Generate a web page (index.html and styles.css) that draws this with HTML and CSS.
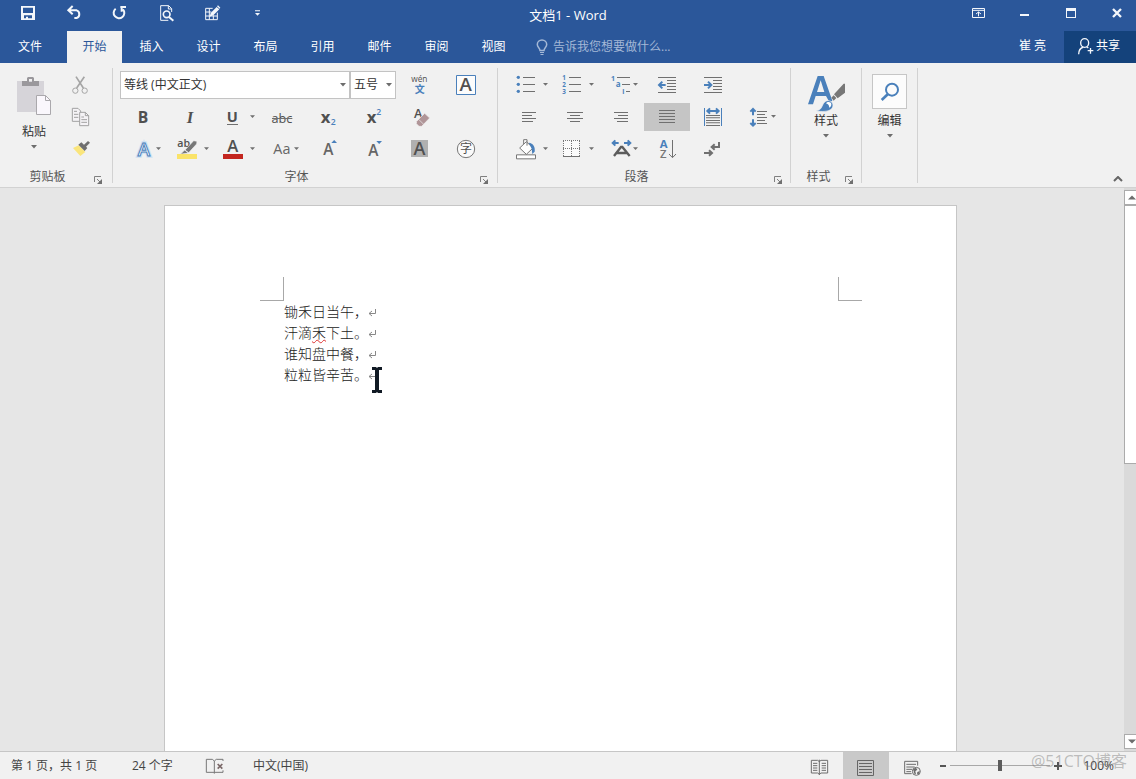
FILE: index.html
```html
<!DOCTYPE html>
<html lang="zh-CN">
<head>
<meta charset="utf-8">
<title>文档1 - Word</title>
<link rel="stylesheet" href="styles.css">
</head>
<body>
<header class="titlebar">
  <div class="quick">
    <button class="bar-btn" aria-label="保存"><svg viewBox="15 0 138 93"><path class="w" fill-rule="evenodd" d="M63 18h42v42h-42zM69 23v16h30v-16zM72 46v9h6v-5h6v5h12v-9z"/></svg></button>
    <button class="bar-btn" aria-label="撤消"><svg viewBox="153 0 138 93"><path class="ws" stroke-width="6" d="M206 31h24a11 12 0 0 1 0 23h-7M218 18l-13 13 13 12"/></svg></button>
    <button class="bar-btn" aria-label="重复"><svg viewBox="291 0 138 93"><path class="ws" stroke-width="6" d="M347 26a16 16 0 1 0 22 2M361 21h17M365 20v15"/></svg></button>
    <button class="bar-btn" aria-label="打印预览"><svg viewBox="429 0 138 93"><path class="ws" stroke-width="3" d="M515 36V26l-9-9h-24v44h23M505 17v10h10"/><circle class="ws" stroke-width="5" cx="500" cy="43" r="10"/><path class="ws" stroke-width="6" d="M507 51l13 11"/></svg></button>
    <button class="bar-btn" aria-label="绘制表格"><svg viewBox="567 0 138 93"><path class="ws" stroke-width="3" d="M638 25h-21v34h35V38M617 36h17M617 48h35M628 25v34M640 46v13"/><path class="w" d="M629 50l3-11 18-18 8 7-18 18zM651 19l3-3 7 7-2 3z"/></svg></button>
    <button class="bar-btn" aria-label="自定义快速访问工具栏"><svg viewBox="705 0 138 93"><path class="w" d="M765 31h15v3h-15zM765 39h15l-7.500 8z"/></svg></button>
  </div>
  <h1 class="title">文档1 - Word</h1>
  <div class="controls">
    <button class="bar-btn" aria-label="功能区显示选项"><svg viewBox="168 0 138 93"><path class="ws" stroke-width="3" d="M217.500 25.500h36v27h-36zM217 31h36M235.500 49V36M228 42l7.500-6 7.500 6"/></svg></button>
    <button class="bar-btn" aria-label="最小化"><svg viewBox="306 0 138 93"><path class="w" d="M360 42h27v6h-27z"/></svg></button>
    <button class="bar-btn" aria-label="最大化"><svg viewBox="444 0 138 93"><path class="w" fill-rule="evenodd" d="M498 24h30v30h-30zM501 33v18h24v-18z"/></svg></button>
    <button class="bar-btn last" aria-label="关闭"><svg viewBox="582 0 126 93"><path class="ws" stroke-width="7" d="M639 27l24 24M663 27l-24 24"/></svg></button>
  </div>
</header>
<nav class="tabs">
  <button class="tab file">文件</button>
  <button class="tab active">开始</button>
  <button class="tab">插入</button>
  <button class="tab">设计</button>
  <button class="tab">布局</button>
  <button class="tab">引用</button>
  <button class="tab">邮件</button>
  <button class="tab">审阅</button>
  <button class="tab">视图</button>
  <label class="tell"><svg width="12" height="17" viewBox="0 0 12 17"><path fill="none" stroke="#a4b8d6" stroke-width="1.500" d="M4 11.500C4 9 1.300 8.500 1.300 5.500a4.700 4.500 0 0 1 9.400 0C10.700 8.500 8 9 8 11.500z"/><path fill="#a4b8d6" d="M4 13h4v1H4zM4.500 15h3v1h-3z"/></svg><input type="text" aria-label="告诉我您想要做什么" placeholder="告诉我您想要做什么..."></label>
  <span class="user">崔 亮</span>
  <button class="share"><svg width="18" height="18" viewBox="531 110 54 54"><ellipse class="ws" stroke-width="4" cx="554" cy="128" rx="12" ry="13"/><path class="ws" stroke-width="4" d="M536 162c0-12 5-19 14-22M560 139l5 4M563 151h17M571.500 143v17"/></svg>共享</button>
</nav>

<section class="ribbon" aria-label="开始">
  <div class="group clip">
    <div class="tools clip-tools">
      <button class="big paste"><svg width="34" height="38" viewBox="0 0 34 38"><path fill="#d6d4d9" d="M0 4h27v31H0z"/><path fill="#9a989c" fill-rule="evenodd" d="M5 4h5V1l1-1h5l1 1v3h5v5H5zM12 2v3h3V2z"/><path fill="#faf7fc" stroke="#aaa8ac" d="M19.500 18.500h9l5 5v14h-14z"/><path fill="none" stroke="#aaa8ac" d="M28.500 18.500v5h5"/></svg><span>粘贴</span><svg class="caret" width="6" height="4" viewBox="0 0 6 4"><path d="M0 0h6L3 3.500z"/></svg></button>
      <div class="stack">
        <button aria-label="剪切"><svg viewBox="198 21 84 84"><path fill="none" stroke="#a5a5a5" stroke-width="5" d="M228 38l22 34M253 38l-23 34"/><circle fill="none" stroke="#a5a5a5" stroke-width="3" cx="226" cy="80" r="8"/><circle fill="none" stroke="#a5a5a5" stroke-width="3" cx="254" cy="80" r="8"/></svg></button>
        <button aria-label="复制"><svg viewBox="198 117 84 84"><g fill="#f5f3f6" stroke="#a2a2a2" stroke-width="3"><path d="M217 133h17l8 8v31h-25z"/><path d="M239 145h17l10 10v30h-27z"/><path fill="none" d="M256 145v10h10M222 142h9M222 151h13M222 160h13M244 159h8M244 167h17M244 175h17"/></g></svg></button>
        <button aria-label="格式刷"><svg viewBox="198 213 84 84"><path fill="#fae57c" d="M219 252l17-8 20 20-15 12z"/><path fill="#6f6f6f" d="M235 242l9-7 18 17-8 9zM252 242l12-11 6 5-12 12z"/></svg></button>
      </div>
    </div>
    <div class="caption"><span>剪贴板</span><button class="launch" aria-label="剪贴板设置"><svg width="8" height="8" viewBox="0 0 8 8"><path d="M.500 6V.500H7M3 3l3 3"/><path class="tip" d="M8 3v5H3z"/></svg></button></div>
  </div>

  <div class="group font">
    <div class="tools grid8">
      <div class="combo wide"><select aria-label="字体"><option>等线 (中文正文)</option></select><svg class="caret" width="6" height="4" viewBox="0 0 6 4"><path d="M0 0h6L3 3.500z"/></svg></div>
      <div class="combo"><select aria-label="字号"><option>五号</option></select><svg class="caret" width="6" height="4" viewBox="0 0 6 4"><path d="M0 0h6L3 3.500z"/></svg></div>
      <button aria-label="拼音指南"><svg viewBox="438 21 138 84"><text class="t" x="508" y="55" font-size="25" text-anchor="middle">wén</text><text class="tb m" x="509" y="87" font-size="30" text-anchor="middle">文</text></svg></button>
      <button aria-label="字符边框"><svg viewBox="576 21 138 84"><path fill="#fcfcfc" stroke="#4a80bb" stroke-width="3" d="M619.500 34.500h57v57h-57z"/><text class="t m" x="647" y="81" font-size="56" text-anchor="middle">A</text></svg></button>

      <button aria-label="加粗"><svg viewBox="360 117 138 84"><text class="t h" x="429" y="176" font-size="47" text-anchor="middle">B</text></svg></button>
      <button aria-label="倾斜"><svg viewBox="498 117 138 84"><text class="t h serif" x="570" y="176" font-size="50" text-anchor="middle">I</text></svg></button>
      <button aria-label="下划线"><svg viewBox="636 117 138 84"><text class="t h" x="697" y="173" font-size="44" text-anchor="middle">U</text><path class="g" d="M681 180h33v3h-33zM750 154h15l-7.500 8z"/></svg></button>
      <button aria-label="删除线"><svg viewBox="24 117 138 84"><text class="t" x="96" y="177" font-size="38" text-anchor="middle">abc</text><path class="g" d="M66 162h61v3h-61z"/></svg></button>
      <button aria-label="下标"><svg viewBox="162 117 138 84"><text class="t h" x="212" y="176" font-size="50">x</text><text class="tb m" x="242" y="182" font-size="26">2</text></svg></button>
      <button aria-label="上标"><svg viewBox="300 117 138 84"><text class="t h" x="350" y="176" font-size="50">x</text><text class="tb m" x="379" y="152" font-size="26">2</text></svg></button>
      <button aria-label="清除所有格式"><svg viewBox="438 117 138 84"><text class="t m" x="492" y="163" font-size="38">A</text><path fill="#b09598" stroke="#f1f1f1" stroke-width="2" d="M500 172l24-24 15 14-24 25h-8l-8-8z"/><path stroke="#f1f1f1" stroke-width="2" d="M506 166l15 15"/></svg></button>
      <span></span>

      <button aria-label="文本效果"><svg viewBox="360 213 138 84"><text x="432" y="275" font-size="56" text-anchor="middle" class="glow">A</text><text x="432" y="275" font-size="56" text-anchor="middle" class="outline">A</text><path class="g" d="M468 250h15l-7.500 8z"/></svg></button>
      <button aria-label="突出显示"><svg viewBox="498 213 138 84"><text class="t m" x="532" y="248" font-size="32">ab</text><path fill="#777" stroke="#f1f1f1" stroke-width="2" d="M555 258l26-28 10 2-1 8-24 26zM541 271l13-13 11 9z"/><path fill="#fae369" d="M531 270h60v15h-60z"/><path class="g" d="M612 250h15l-7.500 8z"/></svg></button>
      <button aria-label="字体颜色"><svg viewBox="636 213 138 84"><text class="t m" x="698" y="264" font-size="50" text-anchor="middle">A</text><path fill="#c3261f" d="M669 270h60v15h-60z"/><path class="g" d="M750 250h15l-7.500 8z"/></svg></button>
      <button aria-label="更改大小写"><svg viewBox="24 213 138 84"><text class="t l" x="70" y="270" font-size="43">Aa</text><path class="g" d="M132 250h15l-7.500 8z"/></svg></button>
      <button aria-label="增大字号"><svg viewBox="162 213 138 84"><text class="t l m" x="235" y="272" font-size="46" text-anchor="middle">A</text><path class="b" d="M244 237h17l-8.500-9z"/></svg></button>
      <button aria-label="减小字号"><svg viewBox="300 213 138 84"><text class="t l m" x="370" y="275" font-size="46" text-anchor="middle">A</text><path class="b" d="M379 231h17l-8.500 9z"/></svg></button>
      <button aria-label="字符底纹"><svg viewBox="438 213 138 84"><path fill="#b0b0b0" d="M483 228h51v51h-51z"/><text class="t m" x="508" y="273" font-size="54" text-anchor="middle">A</text></svg></button>
      <button aria-label="带圈字符"><svg viewBox="576 213 138 84"><circle fill="#fafafa" stroke="#777" stroke-width="3" cx="648" cy="255" r="26"/><text class="t" x="648" y="268" font-size="36" text-anchor="middle">字</text></svg></button>
    </div>
    <div class="caption"><span>字体</span><button class="launch" aria-label="字体设置"><svg width="8" height="8" viewBox="0 0 8 8"><path d="M.500 6V.500H7M3 3l3 3"/><path class="tip" d="M8 3v5H3z"/></svg></button></div>
  </div>

  <div class="group para">
    <div class="tools grid6">
      <button aria-label="项目符号"><svg viewBox="18 21 138 84"><g class="b"><circle cx="55" cy="40" r="5"/><circle cx="55" cy="61" r="5"/><circle cx="55" cy="82" r="5"/></g><path class="g" d="M69 39h36v3h-36zM69 60h36v3h-36zM69 81h36v3h-36zM129 57h15l-7.500 8z"/></svg></button>
      <button aria-label="编号"><svg viewBox="156 21 138 84"><g class="tb h" font-size="19"><text x="187" y="48">1</text><text x="187" y="69">2</text><text x="187" y="90">3</text></g><path class="g" d="M207 39h36v3h-36zM207 60h36v3h-36zM207 81h36v3h-36zM267 57h15l-7.500 8z"/></svg></button>
      <button aria-label="多级列表"><svg viewBox="294 21 138 84"><g class="tb h" font-size="21"><text x="333" y="50">1</text><text x="347" y="69" font-size="24">a</text><text x="367" y="89">i</text></g><path class="g" d="M351 39h39v3h-39zM366 60h24v3h-24zM378 81h12v3h-12zM399 57h15l-7.500 8z"/></svg></button>
      <button aria-label="减少缩进量"><svg viewBox="432 21 138 84"><path class="g" d="M474 39h54v3h-54zM501 48h27v3h-27zM501 57h27v3h-27zM501 66h27v3h-27zM501 75h27v3h-27zM474 84h54v3h-54z"/><path class="bs" d="M497 63h-18M487 53l-10 10 10 10"/></svg></button>
      <button aria-label="增加缩进量"><svg viewBox="570 21 138 84"><path class="g" d="M612 39h54v3h-54zM639 48h27v3h-27zM639 57h27v3h-27zM639 66h27v3h-27zM639 75h27v3h-27zM612 84h54v3h-54z"/><path class="bs" d="M612 63h20M624 53l10 10-10 10"/></svg></button>
      <span></span>

      <button aria-label="左对齐"><svg viewBox="18 117 138 84"><path class="g" d="M66 144h42v3h-42zM66 153h30v3h-30zM66 162h42v3h-42zM66 171h33v3h-33z"/></svg></button>
      <button aria-label="居中"><svg viewBox="156 117 138 84"><path class="g" d="M201 144h48v3h-48zM210 153h30v3h-30zM201 162h48v3h-48zM210 171h30v3h-30z"/></svg></button>
      <button aria-label="右对齐"><svg viewBox="294 117 138 84"><path class="g" d="M342 144h42v3h-42zM354 153h30v3h-30zM342 162h42v3h-42zM351 171h33v3h-33z"/></svg></button>
      <button class="on" aria-label="两端对齐" aria-pressed="true"><svg viewBox="432 117 138 84"><path class="g" d="M477 138h48v3h-48zM477 147h48v3h-48zM477 156h48v3h-48zM477 165h48v3h-48zM477 174h48v3h-48z"/></svg></button>
      <button aria-label="分散对齐"><svg viewBox="570 117 138 84"><path class="b" d="M612 132h3v54h-3zM663 132h3v54h-3z"/><path class="g" d="M618 153h42v3h-42zM618 160h42v3h-42zM618 168h42v3h-42zM618 175h42v3h-42zM618 183h42v3h-42z"/><path class="bs" d="M622 141h34M630 133l-8 8 8 8M648 133l8 8-8 8"/></svg></button>
      <button aria-label="行距"><svg viewBox="708 117 138 84"><path class="bs" d="M759 136v18M751 143l8-8 8 8M759 184v-18M751 177l8 8 8-8"/><path class="g" d="M771 141h30v3h-30zM771 150h24v3h-24zM771 159h30v3h-30zM771 168h24v3h-24zM771 177h30v3h-30zM813 153h15l-7.500 8z"/></svg></button>

      <button aria-label="底纹"><svg viewBox="18 213 138 84"><path fill="#fff" stroke="#777" stroke-width="3" d="M59 252l20-19 20 19-20 19zM71 240v-13h10v18M49.500 272.500h57v12h-57z"/><path class="b" d="M86 236c14 2 20 12 18 27l-7 7-2-16z"/><path class="g" d="M129 250h15l-7.500 8z"/></svg></button>
      <button aria-label="边框"><svg viewBox="156 213 138 84"><path fill="#fbfbfb" d="M190 229h48v48h-48z"/><path fill="none" stroke="#777" stroke-width="3" stroke-dasharray="3 3" d="M189 229.500h51M189 253.500h51M190.500 231v45M214.500 231v45M238.500 231v45"/><path class="g" d="M189 276h51v3h-51zM267 250h15l-7.500 8z"/></svg></button>
      <button aria-label="中文版式"><svg viewBox="294 213 138 84"><path fill="none" stroke="#5c5c5c" stroke-width="7" d="M342 276l21-27h4l22 27M350 267h32"/><path class="bs" d="M339 237h17M346 229l-8 8 8 8M372 237h17M383 229l8 8-8 8"/><path class="g" d="M399 250h15l-7.500 8z"/></svg></button>
      <button aria-label="排序"><svg viewBox="432 213 138 84"><text class="tb h" x="479" y="253" font-size="34">A</text><text class="t z m" x="480" y="282" font-size="34">Z</text><path class="gs" d="M517.500 228v52M507 270l10.500 11 10.500-11"/></svg></button>
      <button aria-label="显示编辑标记"><svg viewBox="570 213 138 84"><path class="gs thick" d="M657 234v15h-20M644 241l-9 8 9 8M612 267h22M627 259l9 8-9 8"/></svg></button>
      <span></span>
    </div>
    <div class="caption"><span>段落</span><button class="launch" aria-label="段落设置"><svg width="8" height="8" viewBox="0 0 8 8"><path d="M.500 6V.500H7M3 3l3 3"/><path class="tip" d="M8 3v5H3z"/></svg></button></div>
  </div>

  <div class="group styles">
    <div class="tools">
      <button class="big"><svg width="38" height="38" viewBox="202 30 114 114"><path fill="#4a80bb" fill-rule="evenodd" d="M205 121L234 36h18l26 74-9 4-10-18h-31l-8 25zM232 84h22l-11-35z"/><path fill="#777" d="M283 91l29-32h4v27l-22 17zM275 101l7-7 8 8-8 8z"/><path fill="#4a80bb" stroke="#f1f1f1" stroke-width="2" d="M229 141c14-3 16-9 20-18 5-12 15-16 24-11 8 5 9 15 3 22-10 10-28 9-47 7z"/><path fill="#fff" d="M259 118c4-6 15-5 16 2 1 6-4 10-6 11-1-7-3-11-10-13z"/></svg><span>样式</span><svg class="caret" width="6" height="4" viewBox="0 0 6 4"><path d="M0 0h6L3 3.500z"/></svg></button>
    </div>
    <div class="caption"><span>样式</span><button class="launch" aria-label="样式设置"><svg width="8" height="8" viewBox="0 0 8 8"><path d="M.500 6V.500H7M3 3l3 3"/><path class="tip" d="M8 3v5H3z"/></svg></button></div>
  </div>

  <div class="group edit">
    <div class="tools">
      <button class="big"><span class="find"><svg width="33" height="33" viewBox="399 33 99 99"><circle fill="none" stroke="#4a80bb" stroke-width="6" cx="456" cy="77" r="18"/><path stroke="#4a80bb" stroke-width="8" d="M444 90l-19 18"/></svg></span><span>编辑</span><svg class="caret" width="6" height="4" viewBox="0 0 6 4"><path d="M0 0h6L3 3.500z"/></svg></button>
    </div>
  </div>
  <button class="collapse" aria-label="折叠功能区"><svg width="10" height="6" viewBox="0 0 10 6"><path fill="none" stroke="#666" stroke-width="2" d="M1 5l4-4 4 4"/></svg></button>
</section>

<main class="workspace">
  <div class="canvas">
    <article class="page">
      <div class="corners"><i class="corner left"></i><i class="corner right"></i></div>
      <div class="text">
        <p>锄禾日当午，<svg class="mark" viewBox="0 0 8 8"><path d="M7.500 0v4.500H1M4 2L1 4.500 4 7"/></svg></p>
        <p>汗滴<span class="typo">禾</span>下土。<svg class="mark" viewBox="0 0 8 8"><path d="M7.500 0v4.500H1M4 2L1 4.500 4 7"/></svg></p>
        <p>谁知盘中餐，<svg class="mark" viewBox="0 0 8 8"><path d="M7.500 0v4.500H1M4 2L1 4.500 4 7"/></svg></p>
        <p class="last-line">粒粒皆辛苦。<svg class="mark" viewBox="0 0 8 8"><path d="M7.500 0v4.500H1M4 2L1 4.500 4 7"/></svg><svg class="ibeam" width="12" height="26" viewBox="0 0 12 26"><path d="M1 0h4l1 1 1-1h4v3H8v20h3v3H7l-1-1-1 1H1v-3h3V3H1z"/></svg></p>
      </div>
    </article>
  </div>
  <div class="scroll">
    <button class="arrow" aria-label="向上滚动"><svg width="8" height="5" viewBox="0 0 8 5"><path d="M0 4.500h8L4 .500z"/></svg></button>
    <div class="track"><div class="thumb"></div></div>
    <button class="arrow" aria-label="向下滚动"><svg width="8" height="5" viewBox="0 0 8 5"><path d="M0 .500h8L4 4.500z"/></svg></button>
  </div>
</main>

<footer class="status">
  <span class="pages">第 1 页，共 1 页</span>
  <span class="words">24 个字</span>
  <button class="proof" aria-label="校对"><svg width="20" height="18" viewBox="615 36 60 54"><path fill="none" stroke="#777" stroke-width="3" d="M643 82h-24V43h18l6 5v38M643 48l6-5h20v5M643 82h26v-6"/><path fill="none" stroke="#7a6868" stroke-width="5" d="M653 57l14 14M667 57l-14 14"/></svg></button>
  <span class="lang">中文(中国)</span>
  <div class="views">
    <button aria-label="阅读视图"><svg viewBox="18 81 138 81"><path fill="none" stroke="#6d6d6d" stroke-width="3" d="M85 110l-5-4H61v38h19l5 4 5-4h20v-38H90zM85 104v46M66 115h13M66 122h13M66 129h13M66 136h13M92 115h13M92 122h13M92 129h13M92 136h13"/></svg></button>
    <button class="on" aria-label="页面视图" aria-pressed="true"><svg viewBox="156 81 138 81"><path fill="none" stroke="#666" stroke-width="3" d="M199.500 106.500h48v45h-48zM204 115.500h39M204 124.500h39M204 133.500h39M204 142.500h39"/></svg></button>
    <button aria-label="Web 版式视图"><svg viewBox="294 81 138 81"><path fill="none" stroke="#6d6d6d" stroke-width="3" d="M362 146h-21v-37h39v13M346 118h29M346 126h25M346 133h17M346 140h14"/><circle fill="#f1f1f1" stroke="#6d6d6d" stroke-width="3" cx="376" cy="139" r="12"/><path fill="#6d6d6d" d="M366 132l9-4 4 6-6 5 2 9-5-2zM379 141l8-3-4 10-5-2z"/></svg></button>
  </div>
  <button class="step" aria-label="缩小"><svg width="12" height="11" viewBox="0 0 12 11"><path fill="#555" d="M3 5h6v2H3z"/></svg></button>
  <input class="zoom" type="range" min="0" max="100" value="50" aria-label="缩放">
  <button class="step" aria-label="放大"><svg width="12" height="11" viewBox="0 0 12 11"><path fill="#555" d="M2 5h8v2H2zM5 2h2v8H5z"/></svg></button>
  <button class="percent">100%</button>
  <span class="watermark">@51CTO博客</span>
</footer>
</body>
</html>
```
FILE: styles.css
```css
* { box-sizing: border-box; }
html, body { height: 100%; }
body {
  margin: 0;
  display: flex;
  flex-direction: column;
  overflow: hidden;
  background: #e6e6e6;
  color: #444;
  font: 12px/16px "Open Sans", "Noto Sans CJK SC", sans-serif;
}
button {
  margin: 0;
  padding: 0;
  border: 0;
  background: none;
  color: inherit;
  font: inherit;
}
svg { display: block; flex: none; }

/* icon paint */
.w { fill: #f4f7fb; }
.ws { fill: none; stroke: #f4f7fb; }
.g { fill: #707070; }
.gs { fill: none; stroke: #707070; stroke-width: 3; }
.gs.thick { stroke-width: 6; }
.b { fill: #4a80bb; }
.bs { fill: none; stroke: #4a80bb; stroke-width: 6; }
.t { fill: #505050; }
.tb { fill: #4a80bb; }
.l { fill: #666; }
.z { fill: #777; }
.m { font-weight: 600; }
.h { font-weight: 700; }
.serif { font-family: "Liberation Serif", serif; font-style: italic; }
.glow { fill: none; stroke: #cfe1f3; stroke-width: 10; font-weight: 600; }
.outline { fill: #fff; stroke: #4a80bb; stroke-width: 3; font-weight: 600; }

.titlebar {
  display: grid;
  grid-template-columns: 1fr auto 1fr;
  height: 31px;
  flex: none;
  background: #2b579a;
  color: #fff;
}
.quick { display: flex; padding-left: 5px; }
.controls { display: flex; justify-content: flex-end; }
.bar-btn { width: 46px; height: 31px; }
.bar-btn.last { width: 42px; }
.bar-btn svg { width: 100%; height: 100%; }
.title { margin: 0; font-size: 13px; line-height: 30px; font-weight: 400; }

.tabs {
  display: flex;
  gap: 2px;
  height: 32px;
  flex: none;
  background: #2b579a;
  color: #fff;
}
.tab { width: 55px; padding-bottom: 1px; }
.tab.file { width: 60px; margin-right: 5px; }
.tab.active { background: #f1f1f1; color: #2b579a; }
.tell { display: flex; align-items: center; gap: 5px; margin-left: 13px; flex: 1; }
.tell input {
  width: 100%;
  padding: 0;
  border: 0;
  background: none;
  color: #fff;
  font: inherit;
}
.tell input::placeholder { color: #a4b8d6; opacity: 1; }
.user { line-height: 30px; margin-right: 16px; }
.share {
  display: flex;
  align-items: center;
  gap: 1px;
  width: 72px;
  padding: 0 0 2px 13px;
  background: #14427b;
}

.ribbon {
  display: flex;
  flex: none;
  height: 125px;
  background: #f1f1f1;
  border-bottom: 1px solid #d2d2d2;
}
.group { position: relative; padding: 8px 8px 0; border-right: 1px solid transparent; }
.group::after {
  content: "";
  position: absolute;
  top: 5px;
  bottom: 4px;
  right: -1px;
  width: 1px;
  background: #d2d2d2;
}
.clip { width: 113px; }
.font { padding-left: 7px; padding-right: 9px; }
.styles { width: 71px; }
.edit { width: 56px; }
.tools { height: 92px; }
.clip-tools { display: flex; gap: 6px; }
.grid8, .grid6 { display: grid; grid-auto-rows: 28px; row-gap: 4px; }
.grid8 { grid-template-columns: repeat(8, 46px); }
.grid6 { grid-template-columns: repeat(6, 46px); }
.grid8 button svg, .grid6 button svg { width: 46px; height: 28px; }
.on { background: #c5c5c5; }
.stack { display: flex; flex-direction: column; gap: 4px; }
.stack svg { width: 28px; height: 28px; }

.big {
  display: flex;
  flex-direction: column;
  align-items: center;
  width: 100%;
  padding-top: 3px;
  color: #333;
}
.big span { margin-top: 1px; }
.big span + .caret { margin-top: 5px; }
.paste { width: 52px; padding-top: 6px; align-self: flex-start; }
.paste span { margin-top: 9px; }
.big .find { margin-top: 0; border: 1px solid #c6c6c6; background: #fcfcfc; }
.find + span { margin-top: 4px; }
.caret { fill: #6d6d6d; }

.combo { position: relative; }
.combo.wide { grid-column: span 5; }
.combo select {
  appearance: none;
  width: 100%;
  height: 28px;
  padding: 0 16px 0 3px;
  border: 1px solid #c3c3c3;
  border-radius: 0;
  background: #fff;
  color: #333;
  font: inherit;
}
.combo .caret { position: absolute; right: 4px; top: 12px; pointer-events: none; }

.caption { display: flex; height: 24px; }
.caption span { flex: 1; text-align: center; line-height: 28px; color: #555; }
.launch { width: 15px; padding: 13px 0 0 7px; display: flex; align-items: flex-start; }
.clip .launch { width: 17px; }
.launch path { fill: none; stroke: #808080; }
.launch .tip { fill: #707070; stroke: none; }
.collapse { margin: 0 13px 5px auto; align-self: flex-end; }

.workspace { display: flex; flex: 1; min-height: 0; }
.canvas { flex: 1; display: flex; justify-content: center; padding: 17px 3px 0 0; overflow: hidden; }
.page {
  width: 793px;
  background: #fff;
  border: 1px solid #c6c6c6;
  border-bottom: 0;
  padding: 71px 94px 0 95px;
  color: #222;
}
.corners { display: flex; justify-content: space-between; }
.corner { width: 24px; height: 24px; border-bottom: 1px solid #a8a8a8; }
.corner.left { border-right: 1px solid #a8a8a8; }
.corner.right { border-left: 1px solid #a8a8a8; }
.text { padding: 0 24px; font: 300 14px/21px "Noto Sans CJK SC", sans-serif; }
.text p { margin: 0; display: flex; align-items: center; }
.mark { width: 8px; height: 8px; margin-top: 2px; fill: none; stroke: #888; }
.typo { text-decoration: underline wavy #d33 1px; text-underline-offset: 1px; }
.last-line { position: relative; }
.ibeam { position: absolute; left: 87px; top: 3px; fill: #111a24; }

.scroll { display: flex; flex-direction: column; width: 12px; padding: 2px 0; background: #dadada; }
.arrow {
  display: flex;
  align-items: center;
  justify-content: center;
  height: 15px;
  padding-left: 2px;
  border: 1px solid #ababab;
  border-right: 0;
  background: #fff;
}
.arrow svg { fill: #6d6d6d; }
.track { flex: 1; }
.thumb { height: 49%; background: #fff; border: 1px solid #ababab; border-right: 0; }

.status {
  position: relative;
  display: flex;
  align-items: center;
  flex: none;
  height: 28px;
  padding: 0 22px 0 11px;
  background: #f1f1f1;
  border-top: 1px solid #c6c6c6;
}
.status span, .percent { line-height: 18px; padding-top: 1px; }
.pages { width: 121px; }
.words { width: 73px; }
.proof { width: 48px; }
.lang { flex: 1; }
.views { display: flex; align-self: stretch; }
.views button { width: 46px; }
.views svg { width: 46px; height: 27px; }
.status .on { background: #c9c9c9; }
.step { width: 15px; padding-left: 2px; }
.zoom { appearance: none; width: 100px; height: 16px; margin: 0; background: none; }
.zoom::-webkit-slider-runnable-track { height: 1px; background: #a8a8a8; }
.zoom::-webkit-slider-thumb { appearance: none; width: 4px; height: 11px; margin-top: -5px; background: #5c5c5c; }
.percent { margin-left: 18px; }
.watermark {
  position: absolute;
  right: 9px;
  top: -1px;
  color: rgba(120, 120, 120, 0.45);
  font-size: 16px;
}
```
